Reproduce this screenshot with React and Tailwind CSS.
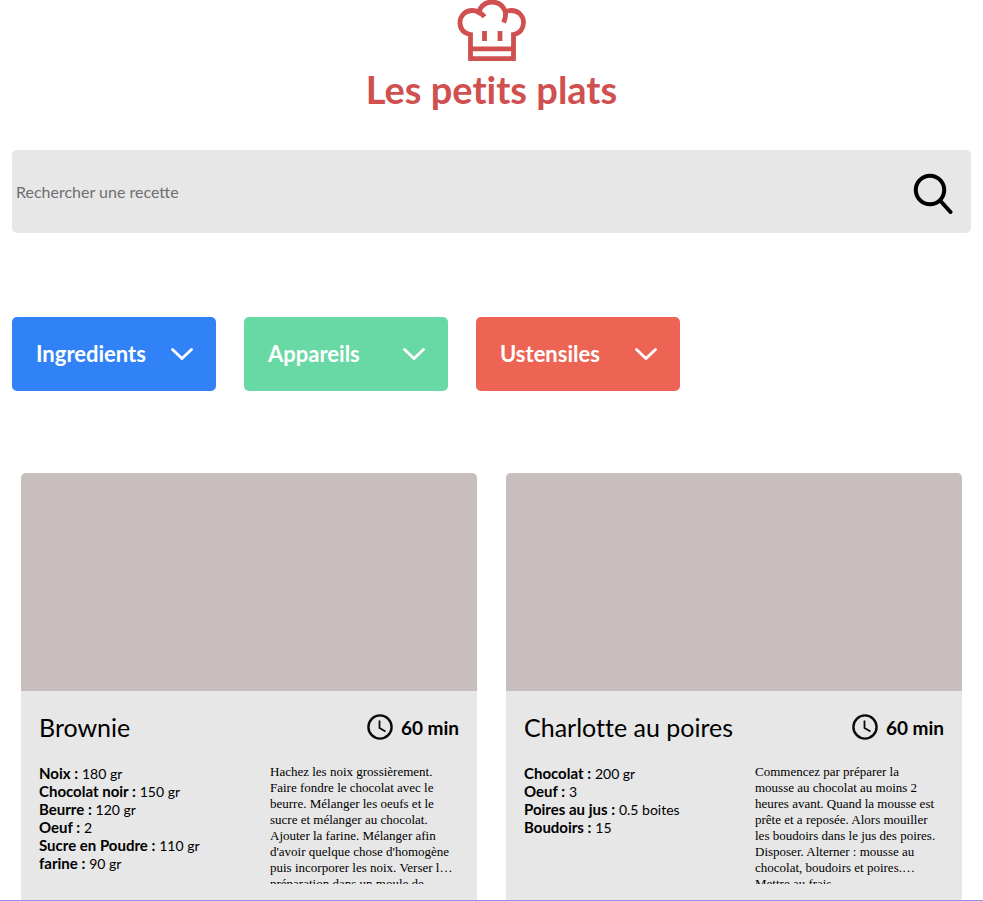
const filters = [
  { label: "Ingredients", color: "bg-[#3282f7]" },
  { label: "Appareils", color: "bg-[#68d9a4]" },
  { label: "Ustensiles", color: "bg-[#ed6454]" },
];

const recipes = [
  {
    name: "Brownie",
    time: "60 min",
    ingredients: [
      ["Noix", "180 gr"],
      ["Chocolat noir", "150 gr"],
      ["Beurre", "120 gr"],
      ["Oeuf", "2"],
      ["Sucre en Poudre", "110 gr"],
      ["farine", "90 gr"],
    ],
    description: [
      "Hachez les noix grossièrement.",
      "Faire fondre le chocolat avec le",
      "beurre. Mélanger les oeufs et le",
      "sucre et mélanger au chocolat.",
      "Ajouter la farine. Mélanger afin",
      "d'avoir quelque chose d'homogène",
      "puis incorporer les noix. Verser l…",
      "préparation dans un moule de",
    ],
  },
  {
    name: "Charlotte au poires",
    time: "60 min",
    ingredients: [
      ["Chocolat", "200 gr"],
      ["Oeuf", "3"],
      ["Poires au jus", "0.5 boites"],
      ["Boudoirs", "15"],
    ],
    description: [
      "Commencez par préparer la",
      "mousse au chocolat au moins 2",
      "heures avant. Quand la mousse est",
      "prête et a reposée. Alors mouiller",
      "les boudoirs dans le jus des poires.",
      "Disposer. Alterner : mousse au",
      "chocolat, boudoirs et poires.…",
      "Mettre au frais.",
    ],
  },
];

function ChefHat() {
  return (
    <svg className="h-[62px] w-[70px]" viewBox="0 0 70 62" fill="none" stroke="#d04f4f" strokeWidth="4.8" aria-hidden="true">
      <path d="M13.5 58.6V34.5C6 33 3 28 3 22.500C3 15.500 8.500 10.500 15 10.500C17.500 10.500 19.500 11 21.500 12.200C24 5.500 28.500 2 35 2C41 2 46 5.500 48.300 11.700C50 10.800 52 10.500 54.500 10.500C61 10.500 66.500 15.500 66.500 22.500C66.500 28 63.500 33 56.500 34.500V58.600Z" />
      <path d="M20 11.500C23 12.500 25.300 14 27.500 16.800M48.500 11C49 15.500 48.500 18.500 46.500 22.500" />
      <path d="M13.500 48.800H56.500" />
      <path d="M27.500 31V41M43 31V41" />
    </svg>
  );
}

function SearchIcon() {
  return (
    <svg className="h-11 w-10" viewBox="0 0 40 44" fill="none" stroke="#000" strokeWidth="4" strokeLinecap="round" aria-hidden="true">
      <circle cx="17" cy="20" r="14.200" />
      <path d="M27.500 31L37.500 42" />
    </svg>
  );
}

function Chevron() {
  return (
    <svg className="h-3 w-[22px]" viewBox="0 0 22 12" fill="none" stroke="#fff" strokeWidth="2.800" strokeLinecap="round" aria-hidden="true">
      <path d="M1.500 1.500L11 10.500L20.500 1.500" />
    </svg>
  );
}

function Clock() {
  return (
    <svg className="size-[26px]" viewBox="0 0 26 26" fill="none" stroke="#0b0b0b" strokeWidth="2.400" aria-hidden="true">
      <circle cx="13" cy="13" r="11.600" />
      <path d="M12.500 6.500V14L18.500 17.500" strokeWidth="1.800" />
    </svg>
  );
}

function RecipeCard({ recipe }) {
  return (
    <article className="overflow-hidden rounded-t-[5px] bg-[#e7e7e7]">
      <div className="h-[218px] bg-[#c7bebd]" />
      <div className="px-[18px] pt-5 pb-4">
        <div className="flex items-center justify-between">
          <h2 className="text-[25px] leading-8">{recipe.name}</h2>
          <div className="flex items-center gap-2">
            <Clock />
            <span className="pt-0.5 text-[19px] leading-[30px] font-bold">{recipe.time}</span>
          </div>
        </div>
        <div className="mt-[21px] grid grid-cols-[11fr_9fr]">
          <ul className="text-[15px] leading-[18px]">
            {recipe.ingredients.map(([name, quantity]) => (
              <li key={name}>
                <strong>{name} :</strong> <span className="text-[14px] leading-4">{quantity}</span>
              </li>
            ))}
          </ul>
          <p className="h-[120px] overflow-hidden font-['Liberation_Serif',serif] text-[13px] leading-4 whitespace-pre">
            {recipe.description.join("\n")}
          </p>
        </div>
      </div>
    </article>
  );
}

export default function App() {
  return (
    <div className="border-b border-[#9a92e0] bg-white font-['Lato',sans-serif] text-black [font-variant-ligatures:none]">
      <header className="flex flex-col items-center">
        <ChefHat />
        <h1 className="mt-1 text-[38px] leading-[46px] font-bold text-[#d04f4f]">Les petits plats</h1>
      </header>
      <main>
        <form className="mx-3 mt-[38px] flex h-[83px] items-center rounded-[5px] bg-[#e7e7e7] pr-[18px]">
          <input
            type="search"
            aria-label="Rechercher une recette"
            placeholder="Rechercher une recette"
            className="h-full min-w-0 flex-1 bg-transparent px-1 text-[16px] outline-none [font-variant-ligatures:normal] placeholder:text-[#6f6f6f]"
          />
          <button type="button" aria-label="Rechercher">
            <SearchIcon />
          </button>
        </form>
        <div className="mx-3 mt-21 flex gap-7">
          {filters.map(({ label, color }) => (
            <button
              key={label}
              type="button"
              className={`flex h-[74px] w-[204px] items-center justify-between rounded-[5px] pr-[23px] pl-6 text-[22px] font-bold text-white ${color}`}
            >
              <span className="pb-0.5">{label}</span>
              <Chevron />
            </button>
          ))}
        </div>
        <section className="mx-[21px] mt-[82px] grid grid-cols-2 gap-[29px]">
          {recipes.map((recipe) => (
            <RecipeCard key={recipe.name} recipe={recipe} />
          ))}
        </section>
      </main>
    </div>
  );
}
